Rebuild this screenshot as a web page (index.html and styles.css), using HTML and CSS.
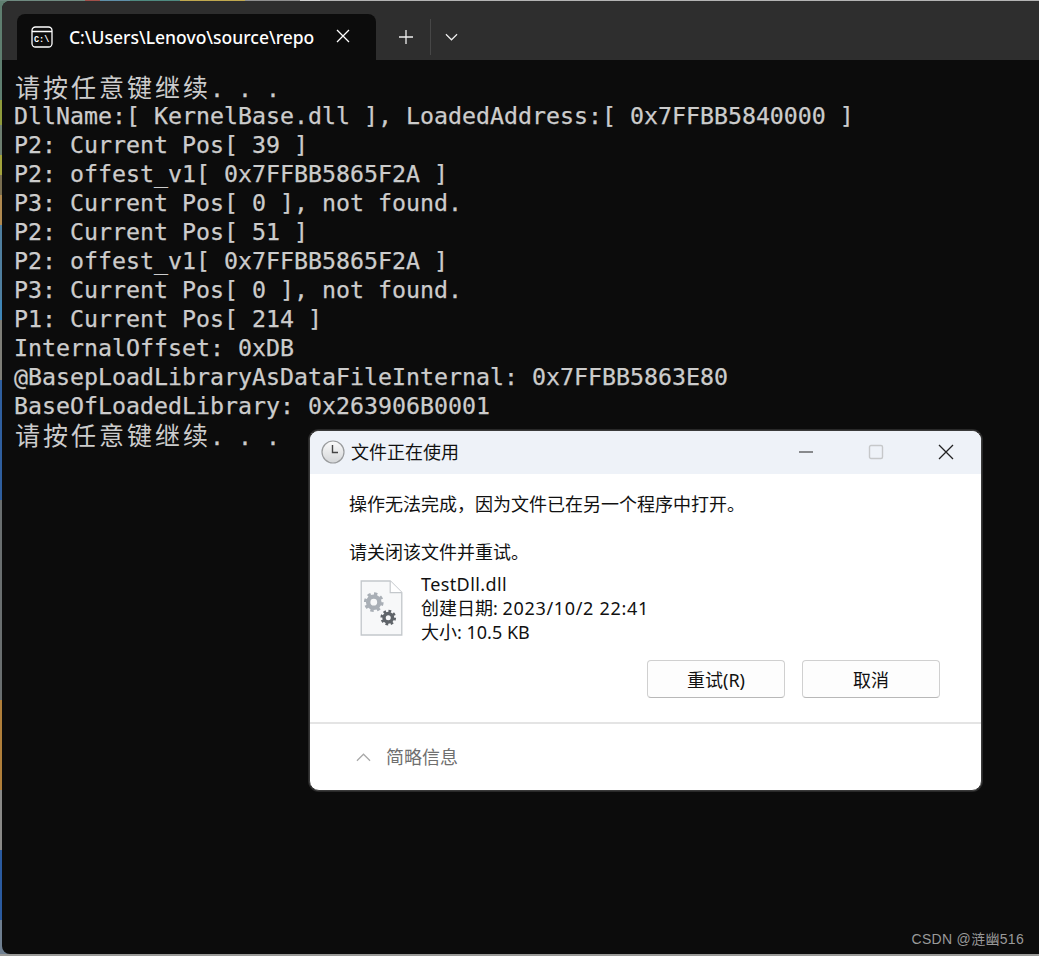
FILE: index.html
```html
<!DOCTYPE html>
<html lang="zh-CN">
<head>
<meta charset="utf-8">
<title>C:\Users\Lenovo\source\repo</title>
<link rel="stylesheet" href="styles.css">
</head>
<body>
<div class="desktop"><div class="desktop-top"></div></div>
<main class="terminal">
  <header class="tabbar">
    <div class="tab">
      <svg class="tab-icon" viewBox="0 0 22 22" width="22" height="22" fill="none" stroke="#fff" stroke-width="1.3"><rect x="1" y="1" width="20" height="20" rx="3.5"/><path d="M1 5.5h20"/><text x="3" y="16" class="tab-icon-text">C:\</text></svg>
      <span class="tab-title">C:\Users\Lenovo\source\repo</span>
      <svg class="tab-close" viewBox="0 0 14 14" width="14" height="14" stroke="#fff" stroke-width="1.3"><path d="M1 1l12 12M13 1L1 13"/></svg>
    </div>
    <svg class="new-tab" viewBox="0 0 16 16" width="16" height="16" stroke="#eee" stroke-width="1.3"><path d="M8 1v14M1 8h14"/></svg>
    <span class="divider"></span>
    <svg class="chevron" viewBox="0 0 14 8" width="13" height="8" fill="none" stroke="#eee" stroke-width="1.3"><path d="M1 1l6 6 6-6"/></svg>
  </header>
  <div class="console">
    <div class="line cjk-line"><span class="cjk">请按任意键继续</span>. . .</div>
    <div class="line">DllName:[ KernelBase.dll ], LoadedAddress:[ 0x7FFBB5840000 ]</div>
    <div class="line">P2: Current Pos[ 39 ]</div>
    <div class="line">P2: offest_v1[ 0x7FFBB5865F2A ]</div>
    <div class="line">P3: Current Pos[ 0 ], not found.</div>
    <div class="line">P2: Current Pos[ 51 ]</div>
    <div class="line">P2: offest_v1[ 0x7FFBB5865F2A ]</div>
    <div class="line">P3: Current Pos[ 0 ], not found.</div>
    <div class="line">P1: Current Pos[ 214 ]</div>
    <div class="line">InternalOffset: 0xDB</div>
    <div class="line">@BasepLoadLibraryAsDataFileInternal: 0x7FFBB5863E80</div>
    <div class="line">BaseOfLoadedLibrary: 0x263906B0001</div>
    <div class="line cjk-line"><span class="cjk">请按任意键继续</span>. . .</div>
  </div>
  <div class="watermark">CSDN @涟幽516</div>
</main>
<section class="dialog">
  <div class="dialog-title">
    <svg class="clock" viewBox="0 0 24 24" width="24" height="24"><defs><linearGradient id="clockface" x1="0" y1="0" x2="0" y2="1"><stop offset="0" stop-color="#fbfbfb"/><stop offset="1" stop-color="#d4d6d8"/></linearGradient></defs><circle cx="12" cy="12" r="11" fill="url(#clockface)" stroke="#9a9c9e" stroke-width="1.2"/><path d="M11.5 5v7.5H17" fill="none" stroke="#444" stroke-width="1.4"/></svg>
    <span class="dialog-name">文件正在使用</span>
    <div class="controls">
      <svg viewBox="0 0 16 16" width="16" height="16" stroke="#222" stroke-width="1.2"><path d="M1 8h14"/></svg>
      <svg viewBox="0 0 16 16" width="16" height="16" fill="none" stroke="#c6c8ca" stroke-width="1.4"><rect x="1.5" y="1.5" width="13" height="13" rx="1.5"/></svg>
      <svg viewBox="0 0 16 16" width="16" height="16" stroke="#222" stroke-width="1.3"><path d="M1 1l14 14M15 1L1 15"/></svg>
    </div>
  </div>
  <div class="dialog-body">
    <p class="msg">操作无法完成，因为文件已在另一个程序中打开。</p>
    <p class="msg second">请关闭该文件并重试。</p>
    <div class="file">
      <svg class="file-icon" viewBox="0 0 44 58" width="43" height="56">
        <path d="M1 1h30l12 12v44H1z" fill="#f7f8f9" stroke="#c4c8cc" stroke-width="1.4"/>
        <path d="M31 1v12h12" fill="#fff" stroke="#c4c8cc" stroke-width="1.2"/>
        <g fill="none" stroke-linecap="butt">
          <circle cx="14" cy="23" r="5.800" stroke="#a9afb6" stroke-width="4.600"/>
          <circle cx="14" cy="23" r="8.800" stroke="#a9afb6" stroke-width="2.800" stroke-dasharray="3.460 3.450"/>
          <circle cx="29" cy="39" r="4.400" stroke="#5f6469" stroke-width="3.600"/>
          <circle cx="29" cy="39" r="6.800" stroke="#5f6469" stroke-width="2.600" stroke-dasharray="2.800 2.540"/>
        </g>
      </svg>
      <div class="file-info">
        <div class="file-name">TestDll.dll</div>
        <div>创建日期: <span class="file-date">2023/10/2 22:41</span></div>
        <div>大小: 10.5 KB</div>
      </div>
    </div>
    <div class="buttons">
      <button class="btn">重试(R)</button>
      <button class="btn">取消</button>
    </div>
  </div>
  <footer class="dialog-foot">
    <svg viewBox="0 0 16 9" width="15" height="9" fill="none" stroke="#a8a8a8" stroke-width="1.3"><path d="M1 8l7-7 7 7"/></svg>
    <span class="less">简略信息</span>
  </footer>
</section>
</body>
</html>
```
FILE: styles.css
```css
* { box-sizing: border-box; }
html, body { margin: 0; padding: 0; }
body {
  width: 1039px;
  height: 956px;
  overflow: hidden;
  position: relative;
  background: #8f8f8f;
  font-family: "Noto Sans", "Noto Sans CJK SC", sans-serif;
}
.desktop {
  position: absolute;
  inset: 0;
  background: linear-gradient(180deg,
    #5f7f70 0 100px, #8f9c3c 100px 125px, #6d7f70 125px 155px, #a3a43c 155px 175px,
    #7a6f50 175px 195px, #b08a50 195px 225px, #4f7f9f 225px 300px, #3f86b8 300px 320px,
    #7f7f78 320px 380px, #2f5f9f 380px 500px, #6a6f70 500px 700px, #b07f3a 700px 790px,
    #8a8a88 790px 850px, #2b5ba0 850px 920px, #6f7f90 920px 954px, #9a9a98 954px);
}
.desktop-top {
  height: 1px;
  background: linear-gradient(90deg,
    #6f8a80 0 85px, #a0504a 85px 100px, #5f8fa8 100px 130px, #4f8a80 130px 180px,
    #c0a84f 180px 245px, #8f8f8f 245px 300px, #d0d0d0 300px 320px, #b4b4b4 320px);
}
.terminal {
  position: absolute;
  left: 2px;
  top: 1px;
  width: 1037px;
  height: 953px;
  background: #0c0c0c;
  border-radius: 8px 0 0 8px;
  overflow: hidden;
}
.tabbar {
  height: 59px;
  background: #2e2e2e;
  display: flex;
  align-items: flex-end;
  padding-left: 15px;
}
.tab {
  width: 359px;
  height: 46px;
  background: #0c0c0c;
  border-radius: 8px 8px 0 0;
  display: flex;
  align-items: center;
  padding-left: 14px;
  padding-bottom: 1px;
  color: #fff;
}
.tab-icon { flex: none; }
.tab-icon-text { font: 700 8.500px "Liberation Mono", monospace; fill: #fff; stroke: none; }
.tab-title {
  margin: 1px 0 0 16px;
  font: 500 17.500px "Noto Sans", "Open Sans", sans-serif;
  white-space: nowrap;
  width: 253px;
}
.tab-close { margin-left: 14px; margin-bottom: 1px; flex: none; }
.new-tab { margin: 0 0 15px 22px; flex: none; }
.divider { width: 1px; height: 36px; background: #474747; margin: 0 0 5px 16px; }
.chevron { margin: 0 0 19px 14px; flex: none; }
.console {
  padding: 12px 0 0 12px;
  font-family: "DejaVu Sans Mono", monospace;
  font-size: 23.250px;
  line-height: 29px;
  color: #cccccc;
  -webkit-text-stroke: 0.25px #cccccc;
}
.line { height: 29px; white-space: pre; }
.cjk-line { padding-left: 1px; }
.cjk {
  font-family: "Noto Sans CJK SC", sans-serif;
  font-size: 25px;
  font-weight: 400;
  letter-spacing: 3px;
  margin-right: -1px;
  -webkit-text-stroke: 0;
}
.watermark {
  position: absolute;
  right: 15px;
  bottom: 6px;
  font-family: "Liberation Sans", "Noto Sans CJK SC", sans-serif;
  font-size: 14px;
  letter-spacing: 0.3px;
  color: #9a9a9a;
}
.dialog {
  position: absolute;
  left: 309px;
  top: 430px;
  width: 673px;
  height: 361px;
  background: #fff;
  border: 1px solid #3a3a3a;
  box-shadow: 0 0 0 1px rgba(70, 70, 70, 0.5);
  border-radius: 10px;
  overflow: hidden;
  color: #111;
  display: flex;
  flex-direction: column;
}
.dialog-title {
  height: 43px;
  flex: none;
  background: #eef2f8;
  display: flex;
  align-items: center;
  padding: 0 0 2px 11px;
  font-size: 18px;
}
.dialog-name { margin-left: 6px; line-height: 24px; }
.controls {
  margin-left: auto;
  margin-right: 27px;
  display: flex;
  gap: 54px;
}
.dialog-body { flex: 1; padding: 0 0 0 39px; font-size: 18px; line-height: 24px; }
.msg { margin: 0; padding-top: 18px; height: 42px; }
.second { padding-top: 24px; height: 48px; }
.file { display: flex; margin: 8px 0 0 11px; }
.file-icon { margin-top: 8px; flex: none; }
.file-info { margin-left: 18px; }
.file-name { letter-spacing: 0.4px; }
.file-date { letter-spacing: 0.68px; }
.buttons { display: flex; gap: 17px; margin: 16px 0 0 298px; }
.btn {
  width: 138px;
  height: 38px;
  background: #fdfdfd;
  border: 1px solid #d0d0d0;
  border-bottom-color: #b8b8b8;
  border-radius: 4px;
  font: 18px "Noto Sans", "Noto Sans CJK SC", sans-serif;
  color: #111;
  padding: 0;
}
.dialog-foot {
  height: 68px;
  flex: none;
  border-top: 2px solid #e4e4e4;
  display: flex;
  align-items: center;
  padding-left: 46px;
  font-size: 18px;
  color: #6f6f6f;
}
.less { margin-left: 15px; line-height: 24px; }
```
